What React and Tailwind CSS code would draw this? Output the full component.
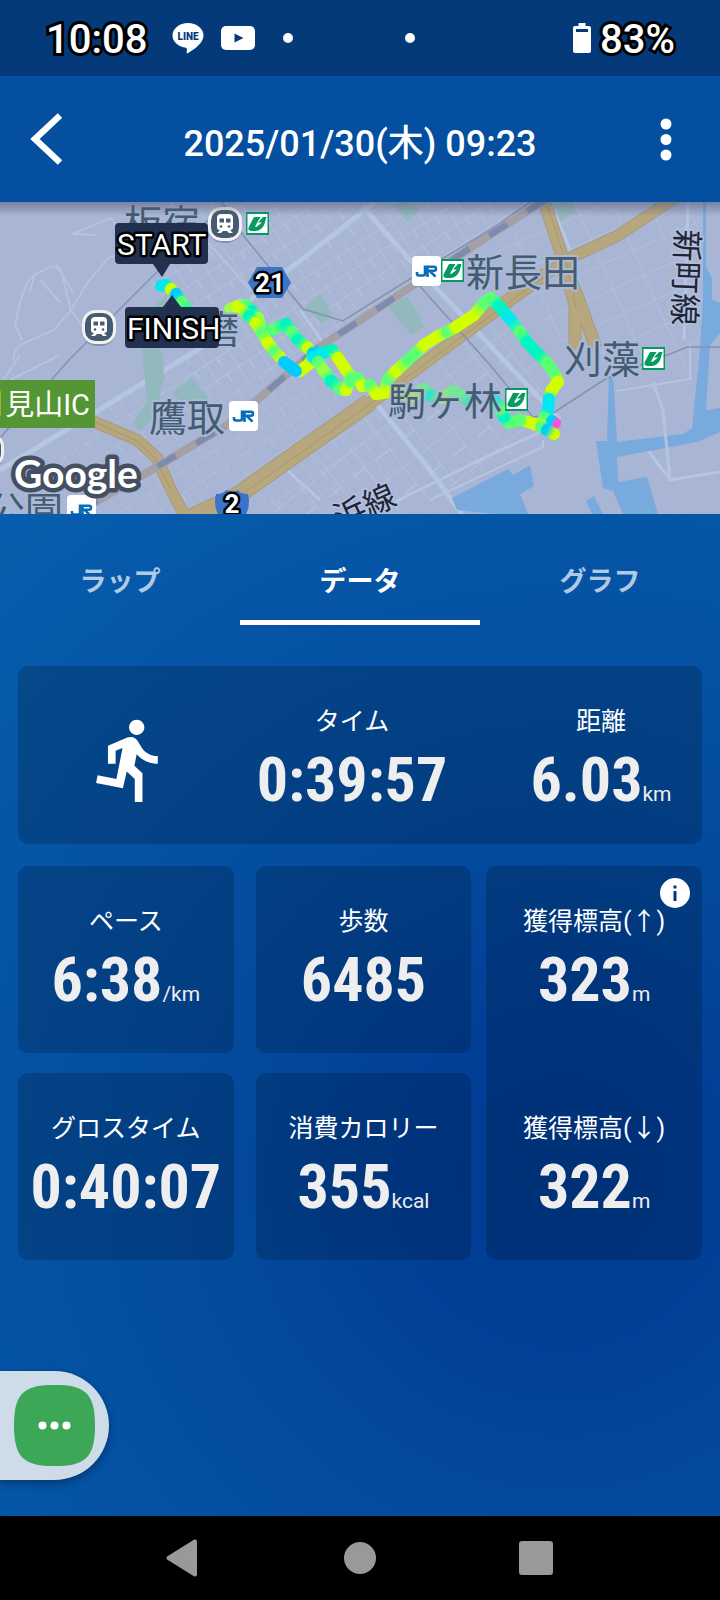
import React from "react";

const OUTLINE = "[paint-order:stroke_fill] [-webkit-text-stroke:6px_#000]";
const TEXT_FONT = "font-['Roboto','Noto_Sans_CJK_JP',sans-serif]";

const C = {
  t: "#00f5c0",
  c: "#00e8f0",
  b: "#00ccff",
  g: "#5cff74",
  l: "#9dff45",
  y: "#d2ff00",
  m: "#ff4fd8",
};

const TRACKS = [
  [[161, 286, "c"], [166, 285, "c"], [171, 289, "y"], [176, 294, "b"], [182, 302, "g"], [190, 314, "t"]],
  [[230, 309, "l"], [238, 306, "y"], [246, 305, "g"], [252, 311, "t"], [258, 318, "l"], [262, 328, "g"], [264, 335, "t"], [274, 329, "g"], [286, 324, "t"], [292, 332, "g"], [298, 340, "t"], [308, 348, "y"], [313, 353, "b"], [322, 353, "c"], [332, 350, "t"], [338, 358, "y"], [346, 370, "y"], [352, 378, "g"], [358, 378, "g"]],
  [[240, 309, "y"], [249, 316, "t"], [256, 323, "y"], [262, 333, "g"], [268, 343, "y"], [275, 352, "g"], [280, 357, "y"]],
  [[300, 371, "y"], [309, 364, "y"], [313, 357, "c"], [318, 362, "g"], [324, 371, "l"], [331, 381, "t"], [340, 389, "g"], [346, 390, "y"], [350, 381, "g"], [358, 378, "g"], [362, 386, "y"], [370, 385, "g"], [376, 394, "y"], [384, 393, "y"], [388, 379, "g"], [396, 371, "y"], [408, 360, "g"], [417, 352, "g"], [424, 345, "y"], [438, 336, "y"], [447, 332, "g"], [456, 327, "y"], [474, 315, "y"], [484, 303, "g"], [491, 298, "g"], [499, 306, "t"], [511, 320, "c"], [520, 332, "g"], [527, 342, "t"], [538, 354, "t"], [547, 363, "g"], [555, 374, "g"], [558, 382, "y"], [551, 391, "y"], [549, 399, "c"], [548, 410, "c"], [544, 418, "g"], [541, 426, "y"], [528, 422, "y"], [520, 420, "g"], [509, 423, "g"], [504, 417, "t"], [500, 409, "g"], [494, 400, "c"]],
  [[389, 392, "y"], [400, 394, "l"], [412, 397, "y"], [424, 389, "g"], [431, 396, "t"], [442, 398, "l"], [453, 391, "g"], [461, 395, "g"], [470, 402, "t"]],
  [[552, 421, "b"], [555, 423, "m"]],
  [[541, 427, "g"], [547, 430, "b"], [554, 434, "y"]],
  [[284, 362, "b"], [296, 371, "b"]],
];

function Track({ points, id }) {
  return (
    <g strokeWidth="12" strokeLinecap="round">
      {points.slice(1).map((p, i) => {
        const q = points[i];
        const gid = `trk${id}-${i}`;
        return (
          <g key={gid}>
            <linearGradient id={gid} gradientUnits="userSpaceOnUse" x1={q[0]} y1={q[1]} x2={p[0]} y2={p[1]}>
              <stop offset="0" stopColor={C[q[2]]} />
              <stop offset="1" stopColor={C[p[2]]} />
            </linearGradient>
            <line x1={q[0]} y1={q[1]} x2={p[0]} y2={p[1]} stroke={`url(#${gid})`} />
          </g>
        );
      })}
    </g>
  );
}

function Station({ x, y }) {
  return (
    <g transform={`translate(${x} ${y})`}>
      <rect x="-17" y="-16" width="34" height="35" rx="15" fill="#5d6b86" opacity="0.5" />
      <rect x="-15.500" y="-15.500" width="31" height="31" rx="12" fill="#435c72" stroke="#f3f1ef" strokeWidth="3" />
      <path d="M-8-6q0-4 4-4h8q4 0 4 4v9q0 3-3 3l3 3h-4l-2-2h-4l-2 2h-4l3-3q-3 0-3-3z" fill="#fff" />
      <path d="M-5.500-5.500h4.500v4h-4.500zM1-5.500h4.500v4H1z" fill="#435c72" />
      <circle cx="-4" cy="2.500" r="1.300" fill="#435c72" />
      <circle cx="4" cy="2.500" r="1.300" fill="#435c72" />
    </g>
  );
}

function Subway({ x, y }) {
  return (
    <g transform={`translate(${x} ${y})`}>
      <rect width="23" height="23" fill="#069a63" />
      <rect x="1.500" y="2" width="20" height="19" fill="#fff" />
      <path d="M8 5h6.500l-5 8.500q-.5 2.500 1.500 1l5-4h-4l5-5.500h3.500l-2 7q-2.500 6.500-9 7H5.500q-4.500-.5-2.500-4.500z" fill="#069a63" />
    </g>
  );
}

function Jr({ x, y }) {
  return (
    <g transform={`translate(${x} ${y})`}>
      <rect width="29" height="30" rx="4" fill="#fff" />
      <path d="M5 16v1.500q0 2 2 2h4q2 0 2-2V9.500M15.500 21V10.700h6.500q2 0 2 2t-2 2h-4.500l6 6" fill="none" stroke="#0b6db9" strokeWidth="2.600" />
    </g>
  );
}

function MapView() {
  return (
    <svg
      viewBox="0 202 720 312"
      preserveAspectRatio="xMidYMid slice"
      className="block w-full"
      role="img"
      aria-label="ルート地図"
    >
      <defs>
        <pattern id="gridA" width="26" height="19" patternUnits="userSpaceOnUse" patternTransform="rotate(-33)">
          <path d="M0 0H26M0 0V19M13 0V10" fill="none" stroke="#b4c3de" strokeWidth="1.300" />
        </pattern>
        <pattern id="gridB" width="44" height="31" patternUnits="userSpaceOnUse" patternTransform="rotate(52)">
          <path d="M0 0H44M0 0V31M22 0V16" fill="none" stroke="#b4c3de" strokeWidth="1.500" />
        </pattern>
        <pattern id="gridC" width="34" height="27" patternUnits="userSpaceOnUse" patternTransform="rotate(-24)">
          <path d="M0 0H34M0 0V27" fill="none" stroke="#b4c3de" strokeWidth="1.500" />
        </pattern>
        <linearGradient id="headShade" x1="0" x2="0" y1="0" y2="1">
          <stop offset="0" stopColor="#4d5672" stopOpacity="0.55" />
          <stop offset="1" stopColor="#4d5672" stopOpacity="0" />
        </linearGradient>
      </defs>

      <rect x="0" y="202" width="720" height="312" fill="#a8b5d4" />
      <path d="M205 202H530L300 365 190 390 165 330 150 280z" fill="url(#gridA)" />
      <path d="M60 440L140 380 230 350 390 400 400 514H60z" fill="url(#gridA)" opacity="0.7" />
      <path d="M380 400L490 300 560 390 540 440 400 514H250z" fill="url(#gridB)" />
      <path d="M540 202H700V370L610 375 560 340 490 260z" fill="url(#gridC)" />

      <g fill="none" stroke="#b4c3de" strokeWidth="2">
        <path d="M72 234L111 218 120 232 135 237M72 234l24 1M138 248L108 258 88 282 71 310 54 330 22 344 15 350 13 360" />
        <path d="M51 266L30 278 24 290 20 302 15 325 22 340M51 266l10 4 10 40M40 280l20 22M56 264l18 30M35 272l-5 20" />
        <path d="M71 310l14 20 12 12M10 380L60 355M0 400L70 395M20 355L0 385M170 202L215 250 250 290" />
      </g>
      <g fill="none" stroke="#b4c6e1" strokeWidth="5">
        <path d="M375 202L250 300M362 206L410 260 560 420M375 402L430 470 462 514M0 470L140 385 230 330" />
        <path d="M300 310L325 345M395 502L490 455 545 430M288 471L320 500" strokeWidth="3" />
        <path d="M556 215L570 250 598 350M640 440L670 480 720 472M653 382L663 410 670 480M688 202L684 340" strokeWidth="3" />
        <path d="M430 500L543 447V440M617 391L690 379V345" strokeWidth="2" />
      </g>

      <g fill="#92b9bd">
        <path d="M393 205l14-3 15 5-14 15zM305 307l15-13 13 21-11 8zM388 307l19-10 10 14 7 16-12 8-15-17zM555 203l17-1 4 10-16 9z" />
        <path d="M167 295l-14 12-11 40 3 35 3 20-15 21 7 9 14-14 10-40-1-23-9-12 12-30zM172 393l20-15 16 20-20 10z" />
      </g>

      <g fill="#79aadd">
        <path d="M452 498L508 469 513 475 530 465 534 486 520 494 528 514H495L457 510z" />
        <path d="M596 441H607L609 375H613L617 442 683 434 692 428 700 350 703 297V202H706V267L712 278V300L720 303V333L710 345 706 410 720 408V432L697 442 617 457 618 482 647 477 658 514H623L613 491 603 488z" />
        <path d="M586 501l8-5 9 18H592zM583 300l15 40-6-3z" />
      </g>
      <path d="M653 382L663 410 670 480" fill="none" stroke="#b4c3de" strokeWidth="3" />

      <g fill="none" stroke="#a99a76">
        <path d="M90 420L137 440 157 458 170 488 187 520" strokeWidth="12" />
        <path d="M190 518L235 497 370 402" strokeWidth="18" />
        <path d="M365 407L450 344 547 273" strokeWidth="13" />
        <path d="M500 305L570 258 617 236 675 198" strokeWidth="12" />
        <path d="M543 198L560 250 575 305V350M568 270L596 348" strokeWidth="13" />
      </g>
      <g fill="none" stroke="#b7a77f">
        <path d="M90 420L137 440 157 458 170 488 187 520" strokeWidth="10" />
        <path d="M190 518L235 497 370 402" strokeWidth="16" />
        <path d="M365 407L450 344 547 273" strokeWidth="11" />
        <path d="M500 305L570 258 617 236 675 198" strokeWidth="10" />
        <path d="M543 198L560 250 575 305V350M568 270L596 348" strokeWidth="11" />
        <path d="M235 499L370 404 548 274M546 202l22 66 8 40M95 422l42 19 18 17 15 30" stroke="#a99869" strokeWidth="1" />
      </g>

      <g fill="none">
        <path d="M545 200L490 235 318 348 257 400 227 425 143 475 90 505" stroke="#a4a0a6" strokeWidth="8" />
        <path d="M545 200L490 235 318 348 257 400 227 425 143 475 90 505" stroke="#7e8bb0" strokeWidth="6" strokeDasharray="21 24" />
        <path d="M69 360L157 272 222 206M222 202L243 235 303 309 343 321 440 260 490 230 533 200" stroke="#8492ae" strokeWidth="1.500" />
        <path d="M417 283L490 365 533 417 550 415 607 378 667 355 687 347H720M69 360L0 438" stroke="#8492ae" strokeWidth="1.500" />
      </g>

      {TRACKS.map((points, i) => (
        <g key={i} opacity={i === 4 ? 0.65 : 1}>
          <Track points={points} id={i} />
        </g>
      ))}

      <g
        className="font-['Noto_Sans_CJK_JP',sans-serif] [paint-order:stroke_fill]"
        fill="#445b72"
        stroke="#a9b9d6"
        strokeWidth="4"
        strokeLinejoin="round"
        fontSize="38"
      >
        <text x="124" y="237">板宿</text>
        <text x="201" y="343">磨</text>
        <text x="466" y="286">新長田</text>
        <text x="564" y="373">刈藻</text>
        <text x="388" y="415" strokeOpacity="0.6">駒ヶ林</text>
        <text x="149" y="431">鷹取</text>
        <text x="-13" y="524">公園</text>
      </g>
      <g
        className="font-['Noto_Sans_CJK_JP',sans-serif] [paint-order:stroke_fill]"
        fill="#1e2636"
        stroke="#b4c1dc"
        strokeWidth="3"
        fontSize="32"
      >
        <text transform="translate(676 229) rotate(92)">新町線</text>
        <text transform="translate(340 530) rotate(-24)">浜線</text>
      </g>

      <Station x={99} y={327} />
      <Station x={225} y={224} />
      <Station x={-13} y={450} />
      <Subway x={246} y={212} />
      <Subway x={441} y={259} />
      <Subway x={642} y={347} />
      <Subway x={505} y={388} />
      <Jr x={412} y={256} />
      <Jr x={229} y={401} />
      <Jr x={67} y={495} />

      <rect x="-20" y="380" width="115" height="48" fill="#549633" />
      <text x="90" y="415" textAnchor="end" fontSize="29" fill="#fff" className={TEXT_FONT}>
        月見山IC
      </text>

      <path d="M257 267h25l9 15.500-9 15.500h-25l-9-15.500z" fill="#3a74c9" />
      <path d="M216 494q8 0 10-4 6 3 12 0 2 4 10 4 3 12-3 22h-26q-6-10-3-22z" fill="#3a74c9" />
      <g
        className={`${TEXT_FONT} font-bold [paint-order:stroke_fill]`}
        fill="#fff"
        stroke="#000"
        strokeWidth="5"
        strokeLinejoin="round"
        textAnchor="middle"
        fontSize="26"
      >
        <text x="270" y="292">21</text>
        <text x="232" y="513">2</text>
      </g>

      <text
        x="14"
        y="488"
        fontSize="39"
        fill="#fff"
        stroke="#454f63"
        strokeWidth="9"
        strokeLinejoin="round"
        className="font-['Lato',sans-serif] font-bold [paint-order:stroke_fill]"
      >
        Google
      </text>

      <g fill="#22304f">
        <path d="M119 223h85q4 0 4 4v33q0 4-4 4h-34l-8 13-9-13h-34q-4 0-4-4v-33q0-4 4-4z" />
        <path d="M129 307h34l9-12 9 12h34q4 0 4 4v33q0 4-4 4h-86q-4 0-4-4v-33q0-4 4-4z" />
      </g>
      <g
        className={`${TEXT_FONT} [paint-order:stroke_fill]`}
        fill="#fff"
        stroke="#000"
        strokeWidth="5"
        strokeLinejoin="round"
        fontSize="30"
      >
        <text x="117" y="255">START</text>
        <text x="127" y="339">FINISH</text>
      </g>

      <rect x="0" y="202" width="720" height="14" fill="url(#headShade)" />
    </svg>
  );
}

function Stat({ label, value, unit }) {
  return (
    <div className="flex flex-col items-center gap-2 whitespace-nowrap pt-[38px] text-white">
      <div className="text-[25px] leading-9">{label}</div>
      <div className="flex items-baseline">
        <span className="font-['Roboto_Condensed','Liberation_Sans_Narrow','Roboto',sans-serif] text-[62px] font-bold leading-[64px] text-[#eeeeee]">
          {value}
        </span>
        {unit && <span className="text-[21px] leading-6 text-[#eeeeee]">{unit}</span>}
      </div>
    </div>
  );
}

const CARD = "rounded-[10px] bg-black/18";

export default function App() {
  return (
    <div className={`flex min-h-screen flex-col bg-[#044f9f] text-white ${TEXT_FONT}`}>
      <div className="flex h-[76px] items-center bg-[#053a7a] pr-[45px] pl-[46px]">
        <span className={`pt-[3px] text-[40px] font-medium leading-none ${OUTLINE}`}>10:08</span>
        <svg viewBox="0 0 32 32" className="ml-[25px] h-8 w-8" aria-label="LINE">
          <path d="M16 1C7.500 1 .5 6.500.5 13.500c0 6 5.300 10.800 12.500 12 1.500.3 2 .8 1.900 2l-.3 2.700c-.1 1 .6 1.300 1.500.8C22 27.500 31.500 21 31.500 13.500 31.500 6.500 24.500 1 16 1z" fill="#fff" />
          <text x="16" y="17.500" textAnchor="middle" fontSize="10" fontWeight="900" fill="#053a7a" className="font-['Roboto',sans-serif]">
            LINE
          </text>
        </svg>
        <svg viewBox="0 0 34 24" className="ml-[17px] h-6 w-[34px]" aria-label="YouTube">
          <rect width="34" height="24" rx="5" fill="#fff" />
          <path d="M13.500 7.500l9 4.500-9 4.500z" fill="#053a7a" />
        </svg>
        <span className="ml-7 h-[10px] w-[10px] rounded-full bg-white" />
        <span className="ml-28 h-[10px] w-[10px] rounded-full bg-white" />
        <svg viewBox="0 0 18 30" className="ml-auto h-[30px] w-[18px]" aria-label="battery">
          <path d="M5.500 0h7v3H16q2 0 2 2v23q0 2-2 2H2q-2 0-2-2V5q0-2 2-2h3.500z" fill="#fff" />
          <path d="M3 6h12v3H3z" fill="#053a7a" />
        </svg>
        <span className={`ml-[9px] pt-[3px] text-[40px] font-medium leading-none ${OUTLINE}`}>83%</span>
      </div>

      <header className="flex h-[126px] items-center justify-between bg-[#044fa0] px-[30px]">
        <button aria-label="戻る" className="w-12">
          <svg viewBox="0 0 34 52" className="h-[52px] w-[34px]">
            <path d="M30 2.500L5 26l25 23.500" fill="none" stroke="#fff" strokeWidth="6.500" />
          </svg>
        </button>
        <h1 className="pt-[10px] text-[36px] font-medium leading-[52px]">2025/01/30(木) 09:23</h1>
        <button aria-label="メニュー" className="flex w-12 justify-end">
          <svg viewBox="0 0 48 52" className="h-[52px] w-12" fill="#fff">
            <circle cx="24" cy="11" r="5.500" />
            <circle cx="24" cy="26.500" r="5.500" />
            <circle cx="24" cy="42" r="5.500" />
          </svg>
        </button>
      </header>

      <MapView />

      <main className="relative flex-1 bg-[radial-gradient(circle_at_78%_66%,#003c92_0%,#013f97_18%,#034a9d_40%,#0553a5_68%,#085eae_100%)] pb-[140px]">
        <nav className="grid h-[111px] grid-cols-3 text-[27px] font-bold">
          <button className="border-b-[5px] border-transparent pt-[30px] text-white/70">
            ラップ
          </button>
          <button className="border-b-[5px] border-white pt-[30px]">データ</button>
          <button className="border-b-[5px] border-transparent pt-[30px] text-white/70">
            グラフ
          </button>
        </nav>

        <div className="mt-[41px] px-[18px]">
          <section className={`grid h-[178px] grid-cols-[217fr_234fr_31fr_202fr] ${CARD}`}>
            <div className="flex items-center justify-center pt-[10px] pl-2">
              <svg viewBox="0 0 24 24" className="h-[92px] w-[92px]" fill="#fff" aria-hidden="true">
                <path d="M13.490 5.480c1.100 0 2-.9 2-2s-.9-2-2-2-2 .9-2 2 .9 2 2 2zm-3.600 13.900l1-4.400 2.100 2v6h2v-7.500l-2.100-2 .6-3c1.300 1.500 3.300 2.500 5.500 2.500v-2c-1.900 0-3.500-1-4.300-2.400l-1-1.600c-.4-.6-1-1-1.700-1-.3 0-.5.100-.8.100l-5.200 2.200v4.700h2v-3.400l1.800-.7-1.600 8.100-4.900-1-.4 2 7 1.400z" />
              </svg>
            </div>
            <Stat label="タイム" value="0:39:57" />
            <div />
            <Stat label="距離" value="6.03" unit="km" />
          </section>

          <div className="mt-[22px] grid grid-cols-[1fr_22px_1fr_15px_1fr] grid-rows-[187px_187px] gap-y-5">
            <section className={`col-start-1 ${CARD}`}>
              <Stat label="ペース" value="6:38" unit="/km" />
            </section>
            <section className={`col-start-3 ${CARD}`}>
              <Stat label="歩数" value="6485" />
            </section>
            <section className={`relative col-start-5 row-span-2 grid grid-rows-2 gap-y-5 ${CARD}`}>
              <Stat label="獲得標高(↑)" value="323" unit="m" />
              <Stat label="獲得標高(↓)" value="322" unit="m" />
              <button aria-label="情報" className="absolute top-3 right-3">
                <svg viewBox="0 0 30 30" className="h-[30px] w-[30px]">
                  <circle cx="15" cy="15" r="15" fill="#fff" />
                  <path d="M13.500 7.500h3v3h-3zM13.500 13h3v10h-3z" fill="#02387f" />
                </svg>
              </button>
            </section>
            <section className={`col-start-1 row-start-2 ${CARD}`}>
              <Stat label="グロスタイム" value="0:40:07" />
            </section>
            <section className={`col-start-3 row-start-2 ${CARD}`}>
              <Stat label="消費カロリー" value="355" unit="kcal" />
            </section>
          </div>
        </div>

        <button
          aria-label="チャット"
          className="absolute bottom-9 left-0 flex h-[109px] w-[109px] items-center rounded-r-full bg-[#cedbe9] pl-[14px] shadow-[0_3px_8px_rgba(0,0,0,0.35)]"
        >
          <svg viewBox="0 0 81 81" className="h-[81px] w-[81px]">
            <path d="M40.500 0C70 0 81 7 81 40.500S70 81 40.500 81 0 74 0 40.500 11 0 40.500 0z" fill="#3ba757" />
            <g fill="#fff">
              <circle cx="28.500" cy="40.500" r="4" />
              <circle cx="40.500" cy="40.500" r="4" />
              <circle cx="52.500" cy="40.500" r="4" />
            </g>
          </svg>
        </button>
      </main>

      <footer className="flex h-[84px] items-center justify-center gap-[140px] bg-black">
        <button aria-label="前へ">
          <svg viewBox="0 0 36 38" className="h-[38px] w-9">
            <path d="M29 2.500v33L2.500 19z" fill="#999" stroke="#999" strokeWidth="4" strokeLinejoin="round" />
          </svg>
        </button>
        <button aria-label="ホーム">
          <svg viewBox="0 0 36 36" className="h-9 w-9">
            <circle cx="18" cy="18" r="16" fill="#999" />
          </svg>
        </button>
        <button aria-label="履歴">
          <svg viewBox="0 0 36 36" className="h-9 w-9">
            <rect x="1" y="1" width="34" height="34" rx="3" fill="#999" />
          </svg>
        </button>
      </footer>
    </div>
  );
}
